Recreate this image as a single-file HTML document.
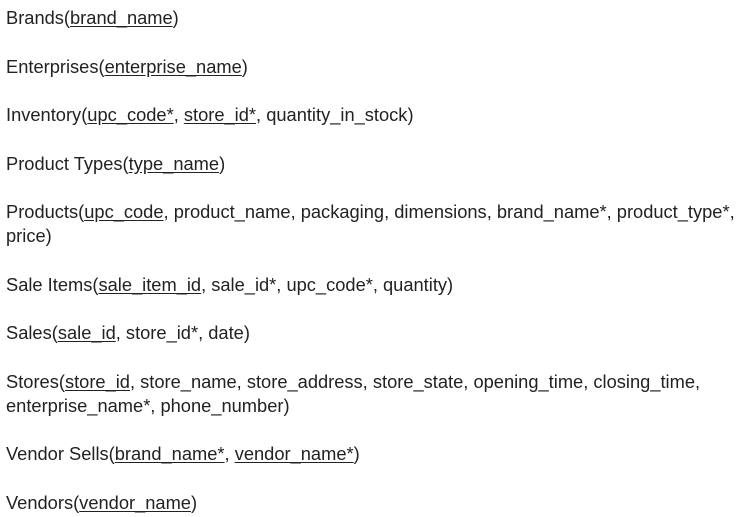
<!DOCTYPE html>
<html><head><meta charset="utf-8"><style>
html,body{margin:0;padding:0;background:#fff;}
body{width:741px;height:517px;overflow:hidden;font-family:"Liberation Sans",Arial,sans-serif;font-size:18.3px;color:#222;}
.w{padding:6px 0 0 6px;}
p{margin:0 0 24.5px 0;line-height:24px;white-space:nowrap;}
u{text-decoration:underline;text-underline-offset:2px;}
</style></head><body><div class="w">
<p>Brands(<u>brand_name</u>)</p>
<p>Enterprises(<u>enterprise_name</u>)</p>
<p>Inventory(<u>upc_code*</u>, <u>store_id*</u>, quantity_in_stock)</p>
<p>Product Types(<u>type_name</u>)</p>
<p>Products(<u>upc_code</u>, product_name, packaging, dimensions, brand_name*, product_type*,<br>price)</p>
<p>Sale Items(<u>sale_item_id</u>, sale_id*, upc_code*, quantity)</p>
<p>Sales(<u>sale_id</u>, store_id*, date)</p>
<p>Stores(<u>store_id</u>, store_name, store_address, store_state, opening_time, closing_time,<br>enterprise_name*, phone_number)</p>
<p>Vendor Sells(<u>brand_name*</u>, <u>vendor_name*</u>)</p>
<p>Vendors(<u>vendor_name</u>)</p>
</div></body></html>
